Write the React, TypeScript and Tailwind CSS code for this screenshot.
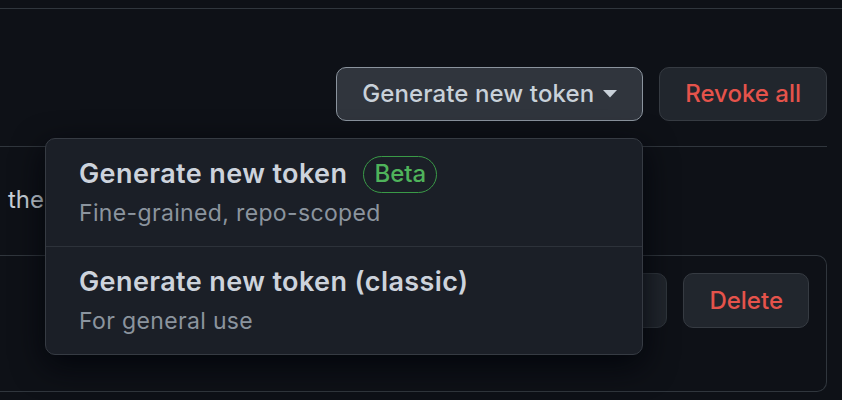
import React from 'react';

const font = { fontFamily: 'Inter, "Noto Sans", sans-serif' };

const Caret = () => (
  <svg width="14" height="8" viewBox="0 0 14 8" className="ml-[9px]" aria-hidden>
    <path d="M0 0 L14 0 L7 7.5 Z" fill="currentColor" />
  </svg>
);

const MenuItem = ({ title, desc, badge }: { title: string; desc: string; badge?: string }) => (
  <div className="pl-[33px] pr-6 pt-[19px] pb-[19px]">
    <div className="flex items-center h-[32px]">
      <span className="text-[27px] leading-[32px] font-semibold text-[#cdd3dc] tracking-[0.4px]">{title}</span>
      {badge && (
        <span className="ml-[16px] h-[37px] px-[10px] flex items-center rounded-full border-[1.5px] border-[#3a9a47] text-[24px] font-medium text-[#4fb35b]">
          {badge}
        </span>
      )}
    </div>
    <div className="mt-[9px] text-[23px] leading-[28px] text-[#8b949e] tracking-[0.35px]">{desc}</div>
  </div>
);

export default function App() {
  return (
    <div className="relative w-[842px] h-[400px] overflow-hidden bg-[#0e1117]" style={font}>
      <div className="pt-[8px]">
        <div className="h-px bg-[#30363d]" />
      </div>

      {/* actions */}
      <div className="flex justify-end gap-[16px] pr-[15px] pt-[58px]">
        <button
          type="button"
          className="h-[54px] px-[25px] flex items-center rounded-[10px] border border-[#8b949e] bg-[#30353d] text-[24px] tracking-[0.1px] font-medium text-[#c9d1d9]"
        >
          Generate new token
          <Caret />
        </button>
        <button
          type="button"
          className="h-[54px] px-[25px] flex items-center rounded-[10px] border border-[#363b42] bg-[#21262d] text-[24px] font-medium text-[#e5534b]"
        >
          Revoke all
        </button>
      </div>

      <div className="mt-[25px] mr-[15px] h-px bg-[#30363d]" />

      <p className="pl-[8px] pt-[37px] text-[24px] leading-[32px] text-[#c9d1d9] whitespace-nowrap">the</p>

      {/* token row */}
      <div className="mt-[39px] mr-[15px] h-[137px] border border-l-0 border-[#30363d] rounded-r-[10px] flex justify-end gap-[16px] pt-[17px] pr-[17px]">
        <div className="h-[55px] w-[140px] rounded-[10px] border border-[#30363d] bg-[#21262d]" />
        <button
          type="button"
          className="h-[55px] px-[25px] flex items-center rounded-[10px] border border-[#363b42] bg-[#21262d] text-[24px] font-medium text-[#e5534b]"
        >
          Delete
        </button>
      </div>

      {/* dropdown overlay */}
      <div className="absolute left-[45px] top-[138px] w-[598px] rounded-[10px] border border-[#363b43] bg-[#1b1f27] shadow-[0_10px_32px_rgba(1,4,9,0.85)]">
        <MenuItem title="Generate new token" desc="Fine-grained, repo-scoped" badge="Beta" />
        <div className="h-px bg-[#2d323a]" />
        <MenuItem title="Generate new token (classic)" desc="For general use" />
      </div>
    </div>
  );
}
